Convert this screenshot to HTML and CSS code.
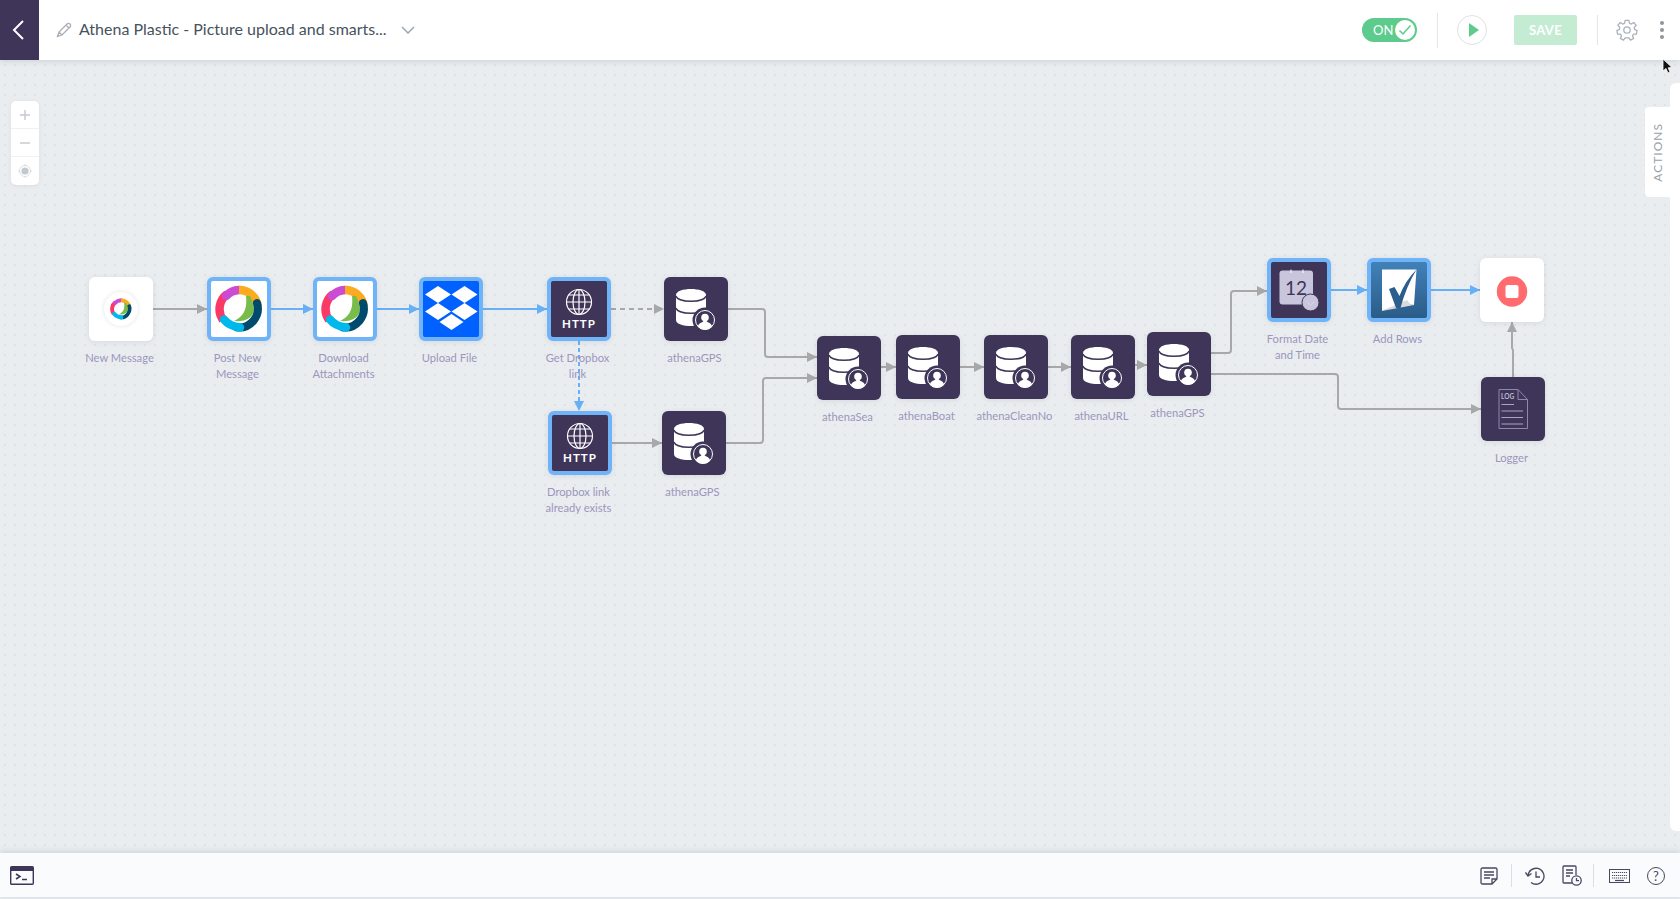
FILE: index.html
```html
<!DOCTYPE html>
<html lang="en">
<head>
<meta charset="utf-8">
<title>Athena Plastic</title>
<link rel="stylesheet" href="styles.css">
</head>
<body>
<svg class="defs" width="0" height="0" aria-hidden="true">
  <defs>
    <symbol id="webex" viewBox="0 0 48 48">
      <path d="M8 35 A19 19 0 0 1 12 9" fill="none" stroke="#f93a66" stroke-width="8.5"/>
      <path d="M11 11 A19 19 0 0 1 24 5" fill="none" stroke="#cb4bd3" stroke-width="8.5" stroke-linecap="round"/>
      <path d="M24 5 A19 19 0 0 1 43 22" fill="none" stroke="#fcaa1e" stroke-width="8.5"/>
      <path d="M35 11 C38 17 39 21 39 25 C38 33 30 37 19 36 C25 33 33 28 31 11 Z" fill="#78bc4a"/>
      <path d="M42 18 A19 19 0 0 1 22 42.500" fill="none" stroke="#004a6d" stroke-width="8" stroke-linecap="round"/>
      <path d="M9 34.500 Q14 41 25 42.500" fill="none" stroke="#00b9ec" stroke-width="8.500" stroke-linecap="round"/>
    </symbol>
    <symbol id="db" viewBox="0 0 64 64">
      <path d="M12 18 C12 10 42 10 42 18 V43 C42 51 12 51 12 43 Z" fill="#fff"/>
      <path d="M12 19 C14 26 40 26 42 19 M12 31 C14 38 40 38 42 31" fill="none" stroke="#3e3558" stroke-width="1.500"/>
      <circle cx="41" cy="43" r="12.500" fill="#3e3558"/>
      <circle cx="41" cy="43" r="9.500" fill="none" stroke="#fff" stroke-width="1"/>
      <circle cx="41" cy="40.500" r="3.800" fill="#fff"/>
      <path d="M33.800 49.500 C35 45.500 38 46 39.500 44 H42.500 C44 46 47 45.500 48.200 49.500 A9.500 9.500 0 0 1 33.800 49.500 Z" fill="#fff"/>
    </symbol>
    <symbol id="http" viewBox="0 0 64 64">
      <g fill="none" stroke="#fff" stroke-width="1.200">
        <circle cx="32" cy="25" r="12.500"/>
        <ellipse cx="32" cy="25" rx="6" ry="12.500"/>
        <path d="M32 12.500 V37.500 M19.500 25 H44.500 M21.500 18 H42.500 M21.500 32 H42.500"/>
      </g>
      <text class="http-text" x="32" y="50.500" text-anchor="middle">HTTP</text>
    </symbol>
  </defs>
</svg>

<header class="topbar">
  <button class="back" type="button" aria-label="Back">
    <svg width="14" height="22" viewBox="0 0 14 22"><path d="M12 2 L3 11 L12 20" fill="none" stroke="#fff" stroke-width="2"/></svg>
  </button>
  <svg class="pencil" width="16" height="16" viewBox="0 0 16 16"><path d="M1.500 14.500 L3 10 L11 2 Q12.500 .8 14 2 Q15.200 3.500 14 5 L6 13 Z M3 10 L6 13 M10 3 L13 6" fill="none" stroke="#a9aeb4" stroke-width="1.300"/></svg>
  <h1 class="title">Athena Plastic - Picture upload and smarts...</h1>
  <svg class="caret" width="14" height="8" viewBox="0 0 14 8"><path d="M1 1 L7 7 L13 1" fill="none" stroke="#9ea7af" stroke-width="1.500"/></svg>
  <div class="topbar-actions">
    <div class="toggle"><span class="toggle-text">ON</span>
      <span class="toggle-knob"><svg width="14" height="12" viewBox="0 0 14 12"><path d="M1.500 6.500 L5 10 L12.500 1.500" fill="none" stroke="#5ccb8c" stroke-width="1.500"/></svg></span>
    </div>
    <span class="divider divider-tall"></span>
    <button class="play" type="button" aria-label="Run"><svg width="12" height="14" viewBox="0 0 12 14"><path d="M1 0 L11 7 L1 14 Z" fill="#5ccb8c"/></svg></button>
    <button class="save" type="button">SAVE</button>
    <span class="divider"></span>
    <svg class="gear" width="22" height="22" viewBox="0 0 24 24" fill="none" stroke="#aab1b9" stroke-width="1.400"><circle cx="12" cy="12" r="3.500"/><path d="M10 1.500 H14 L14.600 4.600 L16.700 5.500 L19.400 3.800 L22 7 L19.900 9.300 L20.400 11.500 L23 12.500 L22.300 16.500 L19.300 16.500 L18 18.400 L19.300 21.200 L15.800 23 L14 20.500 H10 L8.200 23 L4.700 21.200 L6 18.400 L4.700 16.500 L1.700 16.500 L1 12.500 L3.600 11.500 L4.100 9.300 L2 7 L4.600 3.800 L7.300 5.500 L9.400 4.600 Z" stroke-linejoin="round"/></svg>
    <span class="kebab"><i></i><i></i><i></i></span>
  </div>
</header>

<main class="canvas">
  <div class="zoom-tools">
    <span class="zoom-btn"><svg width="12" height="12" viewBox="0 0 12 12"><path d="M6 1 V11 M1 6 H11" stroke="#c3c9cf" stroke-width="1.400"/></svg></span>
    <span class="zoom-btn"><svg width="12" height="12" viewBox="0 0 12 12"><path d="M1 6 H11" stroke="#c3c9cf" stroke-width="1.400"/></svg></span>
    <span class="zoom-btn"><svg width="14" height="14" viewBox="0 0 14 14"><circle cx="7" cy="7" r="5.500" fill="none" stroke="#d3d8dc" stroke-width=".8"/><circle cx="7" cy="7" r="3.600" fill="#c3c9cf"/><path d="M7 0 V1.500 M7 12.500 V14 M0 7 H1.500 M12.500 7 H14" stroke="#d3d8dc" stroke-width=".8"/></svg></span>
  </div>

  <svg class="links" width="1680" height="899" viewBox="0 0 1680 899">
    <defs>
      <marker id="ag" markerWidth="10" markerHeight="10" refX="10" refY="5" orient="auto" markerUnits="userSpaceOnUse"><path d="M0 0 L10 5 L0 10 Z" fill="#a8a8a8"/></marker>
      <marker id="ab" markerWidth="10" markerHeight="10" refX="10" refY="5" orient="auto" markerUnits="userSpaceOnUse"><path d="M0 0 L10 5 L0 10 Z" fill="#67b0f8"/></marker>
    </defs>
    <g class="link-gray" marker-end="url(#ag)">
      <path d="M153 309 H207"/>
      <path d="M612 443 H662"/>
      <path d="M881 367 H896"/>
      <path d="M960 367 H984"/>
      <path d="M1048 367 H1071"/>
      <path d="M1135 365 H1147" stroke-width="3"/>
      <path d="M728 309 H762 Q765 309 765 312 V354 Q765 357 768 357 H817"/>
      <path d="M726 443 H760 Q763 443 763 440 V381 Q763 378 766 378 H817"/>
      <path d="M1211 353 H1228 Q1231 353 1231 350 V294 Q1231 291 1234 291 H1267"/>
      <path d="M1211 374 H1335 Q1338 374 1338 377 V406 Q1338 409 1341 409 H1481"/>
      <path d="M1513 377 V350 L1512 348 V322"/>
      <path d="M611 309 H664" stroke-dasharray="5 4"/>
    </g>
    <g class="link-blue" marker-end="url(#ab)">
      <path d="M271 309 H313"/>
      <path d="M377 309 H419"/>
      <path d="M483 309 H547"/>
      <path d="M579 341 V411" stroke-dasharray="4 3"/>
      <path d="M1331 290 H1367"/>
      <path d="M1431 290 H1480"/>
    </g>
  </svg>

  <div class="node" style="left:89px;top:217px">
    <div class="tile tile-white"><span class="disc"><svg width="22" height="22"><use href="#webex"/></svg></span></div>
    <p class="label">New Message</p>
  </div>
  <div class="node" style="left:207px;top:217px">
    <div class="tile tile-white tile-active"><svg width="48" height="48"><use href="#webex"/></svg></div>
    <p class="label">Post New<br>Message</p>
  </div>
  <div class="node" style="left:313px;top:217px">
    <div class="tile tile-white tile-active"><svg width="48" height="48"><use href="#webex"/></svg></div>
    <p class="label">Download<br>Attachments</p>
  </div>
  <div class="node" style="left:419px;top:217px">
    <div class="tile tile-dropbox tile-active">
      <svg class="icon" width="64" height="64" viewBox="0 0 64 64" fill="#fff"><path d="M19 9 L32 17.500 L19 26 L6 17.500 Z M45.500 9 L58.500 17.500 L45.500 26 L32.500 17.500 Z M19 26 L32 34.500 L19 43 L6 34.500 Z M45.500 26 L58.500 34.500 L45.500 43 L32.500 34.500 Z M32.500 37 L44.500 45 L32.500 53 L20.500 45 Z"/></svg>
    </div>
    <p class="label">Upload File</p>
  </div>
  <div class="node" style="left:547px;top:217px">
    <div class="tile tile-dark tile-active"><svg class="icon" width="64" height="64"><use href="#http"/></svg></div>
    <p class="label">Get Dropbox<br>link</p>
  </div>
  <div class="node" style="left:664px;top:217px">
    <div class="tile tile-dark"><svg class="icon" width="64" height="64"><use href="#db"/></svg></div>
    <p class="label">athenaGPS</p>
  </div>
  <div class="node" style="left:548px;top:351px">
    <div class="tile tile-dark tile-active"><svg class="icon" width="64" height="64"><use href="#http"/></svg></div>
    <p class="label">Dropbox link<br>already exists</p>
  </div>
  <div class="node" style="left:662px;top:351px">
    <div class="tile tile-dark"><svg class="icon" width="64" height="64"><use href="#db"/></svg></div>
    <p class="label">athenaGPS</p>
  </div>
  <div class="node" style="left:817px;top:276px">
    <div class="tile tile-dark"><svg class="icon" width="64" height="64"><use href="#db"/></svg></div>
    <p class="label">athenaSea</p>
  </div>
  <div class="node" style="left:896px;top:275px">
    <div class="tile tile-dark"><svg class="icon" width="64" height="64"><use href="#db"/></svg></div>
    <p class="label">athenaBoat</p>
  </div>
  <div class="node" style="left:984px;top:275px">
    <div class="tile tile-dark"><svg class="icon" width="64" height="64"><use href="#db"/></svg></div>
    <p class="label">athenaCleanNo</p>
  </div>
  <div class="node" style="left:1071px;top:275px">
    <div class="tile tile-dark"><svg class="icon" width="64" height="64"><use href="#db"/></svg></div>
    <p class="label">athenaURL</p>
  </div>
  <div class="node" style="left:1147px;top:272px">
    <div class="tile tile-dark"><svg class="icon" width="64" height="64"><use href="#db"/></svg></div>
    <p class="label">athenaGPS</p>
  </div>
  <div class="node" style="left:1267px;top:198px">
    <div class="tile tile-dark tile-active">
      <svg class="icon" width="64" height="64" viewBox="0 0 64 64">
        <rect x="12.500" y="12.500" width="33.500" height="34" rx="3" fill="#c9c5dd"/>
        <path d="M24 11.500 V15 M36 11.500 V15" stroke="#fff" stroke-width="1"/>
        <text class="cal-text" x="29" y="36.500" text-anchor="middle">12</text>
        <circle cx="43.500" cy="44.500" r="8.500" fill="#c9c5dd" stroke="#3e3558" stroke-width="1"/>
        <path d="M39.500 43.500 L43.500 47 L47.500 43.500" fill="none" stroke="#dad7e8" stroke-width="1"/>
      </svg>
    </div>
    <p class="label">Format Date<br>and Time</p>
  </div>
  <div class="node" style="left:1367px;top:198px">
    <div class="tile tile-sheet tile-active">
      <svg class="icon" width="64" height="64" viewBox="0 0 64 64">
        <path d="M15 11.500 H49.500 L47 47 Q36 44 15 53 Z" fill="#fff"/>
        <path d="M15 53 Q30 46 40 42 Q43 47 47 47 Z" fill="#d9dcdf"/>
        <path d="M22 31 L27.500 29 L32.500 38 Q38 23 49.500 11.500 Q39 29 33.500 50 L29 50 Z" fill="#2b5e8c"/>
      </svg>
    </div>
    <p class="label">Add Rows</p>
  </div>
  <div class="node" style="left:1480px;top:198px">
    <div class="tile tile-white">
      <svg class="icon" width="64" height="64" viewBox="0 0 64 64"><circle cx="32" cy="33.500" r="15.200" fill="#ff6b6e"/><rect x="25.500" y="27" width="13" height="13" rx="2" fill="#fff"/></svg>
    </div>
  </div>
  <div class="node" style="left:1481px;top:317px">
    <div class="tile tile-dark">
      <svg class="icon" width="64" height="64" viewBox="0 0 64 64">
        <path d="M18 12.500 H37 L46.500 22.500 V51.500 H18 Z M37 12.500 V22.500 H46.500" fill="none" stroke="#8d88ad" stroke-width="1"/>
        <text class="log-text" x="20" y="21.500">LOG</text>
        <path d="M20.500 27.500 H33 M20.500 34 H42 M20.500 40.500 H42 M20.500 47 H42" stroke="#a9a5c4" stroke-width="1.200"/>
      </svg>
    </div>
    <p class="label">Logger</p>
  </div>

  <aside class="side-panel"></aside>
  <div class="actions-tab"><span class="actions-text">ACTIONS</span></div>
</main>

<footer class="bottombar">
  <svg width="24" height="19" viewBox="0 0 24 19"><rect x=".7" y=".7" width="22.600" height="17.600" rx="1" fill="none" stroke="#3e3558" stroke-width="1.400"/><rect x="1" y="1" width="22" height="4" fill="#3e3558"/><path d="M6 8 L10 10.500 L6 13" fill="none" stroke="#3e3558" stroke-width="1.500"/><path d="M12 13.500 H17" stroke="#3e3558" stroke-width="1.500"/></svg>
  <div class="bottom-tools">
    <svg width="18" height="18" viewBox="0 0 18 18" fill="none" stroke="#4b4763" stroke-width="1.300"><path d="M12 17 H2.500 Q1 17 1 15.500 V2.500 Q1 1 2.500 1 H15.500 Q17 1 17 2.500 V12 Z M12 17 V12 H17"/><path d="M4 5 H14 M4 8 H14 M4 11 H10"/></svg>
    <span class="tool-divider"></span>
    <svg width="20" height="18" viewBox="0 0 20 18" fill="none" stroke="#4b4763" stroke-width="1.300"><path d="M3 9 A8 8 0 1 1 6 15.500"/><path d="M0.500 5.500 L3 9 L6.500 6.500"/><path d="M11 4.500 V10 H15"/></svg>
    <svg class="tool-report" width="20" height="21" viewBox="0 0 20 21" fill="none" stroke="#4b4763" stroke-width="1.300"><path d="M10 18 H2 Q1 18 1 17 V2 Q1 1 2 1 H13 Q14 1 14 2 V10"/><path d="M4 5 H11 M4 8 H11 M4 11 H8"/><circle cx="14.500" cy="15.500" r="4.700" fill="#fafbfc"/><path d="M14.500 13 V15.700 H17"/></svg>
    <span class="tool-divider tool-divider-b"></span>
    <svg width="21" height="14" viewBox="0 0 21 14" fill="none" stroke="#4b4763"><rect x=".5" y=".5" width="20" height="13" stroke-width="1"/><path d="M3 3.500 H18 M3 6.500 H18 M3 9 H18" stroke-dasharray="1.200 .8" stroke-width="1.200"/><path d="M6 11.500 H15" stroke-width="1.200"/></svg>
    <span class="help">?</span>
  </div>
</footer>

<svg class="cursor" width="12" height="17" viewBox="0 0 12 17"><path d="M1 1 V13 L4 10.500 L6 15 L8 14 L6.200 9.800 L10 9.500 Z" fill="#111" stroke="#fff" stroke-width=".8"/></svg>
</body>
</html>
```

FILE: styles.css
```css
* { box-sizing: border-box; }
html, body { margin: 0; height: 100%; }
body {
  width: 1680px;
  height: 899px;
  overflow: hidden;
  position: relative;
  display: flex;
  flex-direction: column;
  font-family: "Lato", "Liberation Sans", sans-serif;
  background: #eaedf0;
}
.defs { position: absolute; }

.topbar {
  flex: 0 0 60px;
  height: 60px;
  background: #fff;
  display: flex;
  align-items: center;
  box-shadow: 0 1px 6px rgba(60, 70, 85, .18);
  position: relative;
  z-index: 3;
}
.back {
  width: 39px;
  height: 60px;
  border: 0;
  padding: 0 3px 0 0;
  background: #3e3558;
  display: flex;
  align-items: center;
  justify-content: center;
}
.pencil { margin: 0 0 1px 17px; }
.title {
  margin: 0 0 3px 7px;
  font-size: 16px;
  font-weight: 400;
  color: #47525d;
  white-space: nowrap;
}
.caret { margin: 0 0 1px 14px; }
.topbar-actions {
  margin-left: auto;
  display: flex;
  align-items: center;
  height: 60px;
  padding-right: 16px;
}
.toggle {
  width: 55px;
  height: 24px;
  border-radius: 12px;
  background: #5ccb8c;
  display: flex;
  align-items: center;
  justify-content: space-between;
  padding: 0 2px 0 11px;
  color: #fff;
  font-size: 13px;
}
.toggle-knob {
  width: 20px;
  height: 20px;
  border-radius: 50%;
  background: #fff;
  display: flex;
  align-items: center;
  justify-content: center;
}
.divider { width: 1px; height: 30px; background: #e3e5e8; margin-left: 20px; }
.divider-tall { height: 35px; }
.play {
  width: 30px;
  height: 30px;
  margin-left: 19px;
  padding: 0 0 0 3px;
  border-radius: 50%;
  border: 1px solid #dfe1e4;
  background: #fff;
  display: flex;
  align-items: center;
  justify-content: center;
}
.save {
  width: 63px;
  height: 30px;
  margin-left: 27px;
  border: 0;
  border-radius: 2px;
  background: #c4ecd2;
  color: #fff;
  font: 700 13px "Lato", "Liberation Sans", sans-serif;
  letter-spacing: .3px;
}
.gear { margin-left: 18px; }
.kebab {
  margin-left: 22px;
  width: 4px;
  display: flex;
  flex-direction: column;
  gap: 3px;
}
.kebab i { width: 4px; height: 4px; border-radius: 50%; background: #8f959b; }

.canvas {
  flex: 1;
  position: relative;
  background-color: #eaedf0;
  background-image: radial-gradient(circle at 5px 5px, #dfe2e6 0 1px, transparent 1.300px);
  background-size: 10px 10px;
}
.links { position: absolute; left: 0; top: -60px; pointer-events: none; }
.link-gray path, .link-blue path { fill: none; stroke-width: 2; }
.link-gray path { stroke: #a8a8a8; }
.link-blue path { stroke: #67b0f8; }

.zoom-tools {
  position: absolute;
  left: 11px;
  top: 41px;
  width: 28px;
  height: 84px;
  background: #fff;
  border-radius: 5px;
  box-shadow: 0 1px 4px rgba(60, 70, 85, .08);
  display: flex;
  flex-direction: column;
}
.zoom-btn {
  height: 28px;
  display: flex;
  align-items: center;
  justify-content: center;
  border-bottom: 1px solid #eef0f2;
}
.zoom-btn:last-child { border-bottom: 0; }

.node { position: absolute; width: 64px; }
.tile {
  width: 64px;
  height: 64px;
  border-radius: 6px;
  display: flex;
  align-items: center;
  justify-content: center;
  box-shadow: 0 1px 5px rgba(60, 70, 85, .12);
}
.tile-white { background: #fff; }
.tile-dark { background: #3e3558; }
.tile-dropbox { background: #0061fe; }
.tile-sheet { background: linear-gradient(#4181b8, #2b5c88); }
.tile-active { border: 4px solid #6fb3f8; }
.icon { flex: none; }
.disc {
  width: 34px;
  height: 34px;
  border-radius: 50%;
  background: #fff;
  box-shadow: 0 0 4px rgba(60, 70, 85, .15);
  display: flex;
  align-items: center;
  justify-content: center;
}
.http-text { font: 700 11.500px "Lato", "Liberation Sans", sans-serif; letter-spacing: 1px; fill: #fff; }
.cal-text { font: 400 19px "Lato", "Liberation Sans", sans-serif; fill: #3e3558; }
.log-text { font: 700 6.500px "Lato", "Liberation Sans", sans-serif; fill: #bdb9d3; }
.label {
  width: 130px;
  margin: 9px 0 0 -34.500px;
  font-size: 11.200px;
  line-height: 16px;
  color: #9a96bc;
  text-align: center;
  white-space: nowrap;
}

.side-panel {
  position: absolute;
  right: 0;
  top: 23px;
  bottom: 22px;
  width: 10px;
  background: #fff;
  border-radius: 6px 0 0 6px;
}
.actions-tab {
  position: absolute;
  right: 0;
  top: 47px;
  width: 35px;
  height: 90px;
  background: #fff;
  border-radius: 4px 0 0 4px;
  display: flex;
  align-items: center;
  justify-content: center;
}
.actions-text {
  writing-mode: vertical-rl;
  transform: rotate(180deg);
  font-size: 12px;
  letter-spacing: 1px;
  color: #9b9fa6;
  margin-right: 11px;
}

.bottombar {
  flex: 0 0 44px;
  height: 44px;
  margin-bottom: 2px;
  background: #fafbfc;
  box-shadow: 0 -1px 6px rgba(60, 70, 85, .18);
  display: flex;
  align-items: center;
  justify-content: space-between;
  padding: 1px 15px 0 10px;
  position: relative;
  z-index: 3;
}
.bottom-tools { display: flex; align-items: center; }
.tool-divider { width: 1px; height: 23px; background: #dcdee2; margin: 0 13px; }
.tool-divider-b { margin: 0 15px 0 11px; }
.tool-report { margin-left: 17px; }
.help {
  width: 18px;
  height: 18px;
  margin-left: 17px;
  border: 1.300px solid #4b4763;
  border-radius: 50%;
  color: #4b4763;
  font-size: 13px;
  line-height: 16px;
  text-align: center;
}
.cursor { position: absolute; left: 1662px; top: 58px; z-index: 5; }
```
